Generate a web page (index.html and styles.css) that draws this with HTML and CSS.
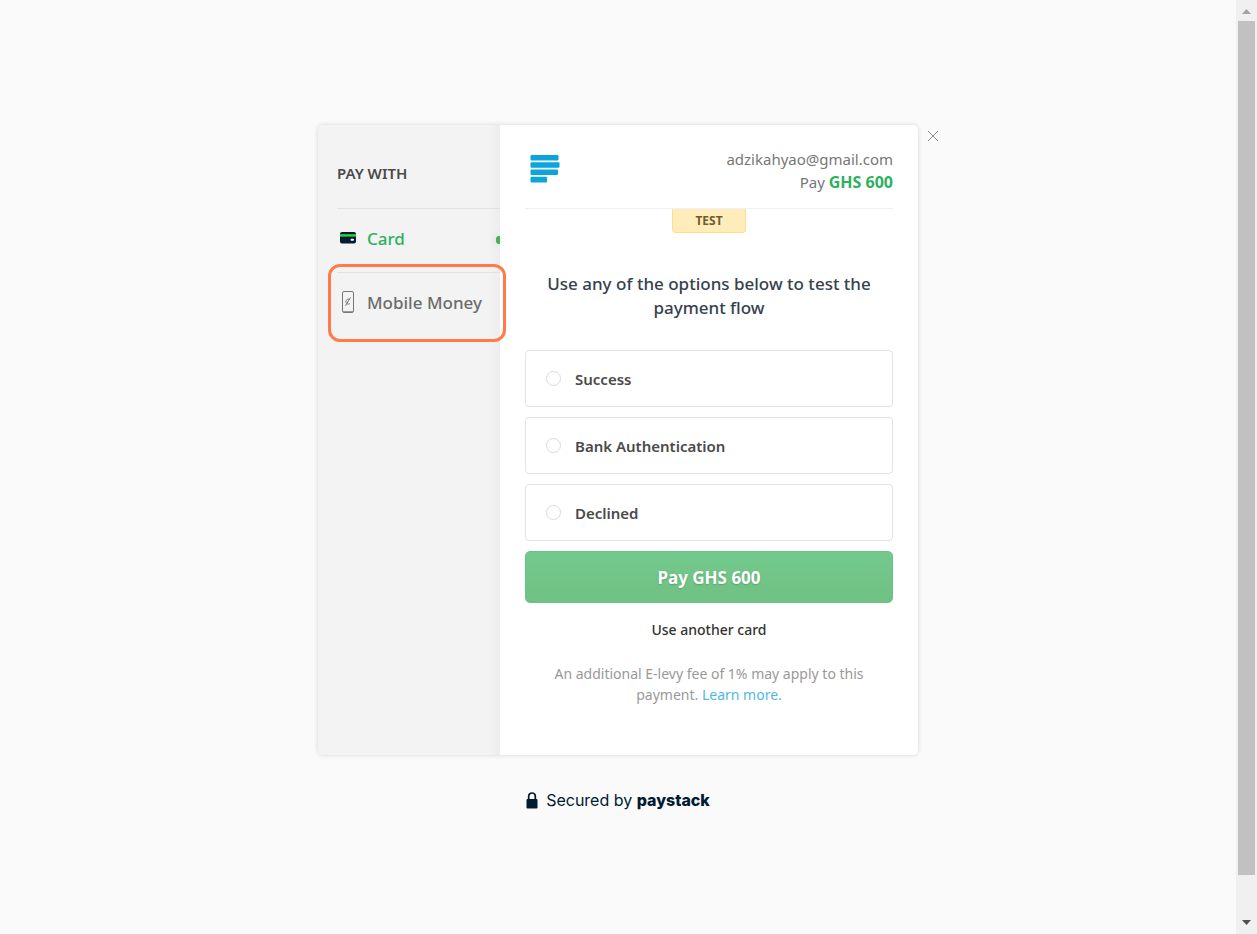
FILE: index.html
```html
<!DOCTYPE html>
<html lang="en">
<head>
<meta charset="utf-8">
<meta name="viewport" content="width=device-width, initial-scale=1">
<title>Paystack Checkout</title>
<link rel="stylesheet" href="styles.css">
</head>
<body>
<div class="page">
  <main class="stage">
    <div class="checkout">
      <nav class="channels" aria-label="Payment channels">
        <h2 class="channels-title">PAY WITH</h2>
        <button class="channel channel-active" type="button">
          <svg class="channel-icon" width="22" height="24" viewBox="0 0 22 24" aria-hidden="true">
            <rect x="3" y="5" width="16" height="11.500" rx="2" fill="#011b33"/>
            <path d="M3 7.200h16v2.400H3z" fill="#2fd33f"/>
            <rect x="13.500" y="11.800" width="3.500" height="2" rx="1" fill="#fff"/>
          </svg>
          <span>Card</span>
        </button>
        <button class="channel channel-marked" type="button">
          <svg class="channel-icon" width="22" height="24" viewBox="0 0 22 24" fill="none" stroke="#777" aria-hidden="true">
            <rect x="5.500" y="0.500" width="11" height="21" rx="1.500"/>
            <path d="M6 20.500h10" stroke="#999"/>
            <path d="M13 8.900C11.600 7.300 8.900 8.300 8.900 10.600s2.700 3.300 4.100 1.700M13.500 6.400L8.500 14.800"/>
          </svg>
          <span>Mobile Money</span>
        </button>
      </nav>
      <section class="panel">
        <header class="panel-head">
          <svg width="30" height="28" viewBox="0 0 30 28" fill="#0ba4db" role="img" aria-label="Merchant logo">
            <rect x="0.500" y="0" width="28" height="5.600" rx="1"/>
            <rect x="0.500" y="7.200" width="29" height="5.600" rx="1"/>
            <rect x="0.500" y="14.400" width="27.500" height="5.600" rx="1"/>
            <rect x="0.500" y="21.800" width="16.500" height="5.600" rx="1"/>
          </svg>
          <div class="customer">
            <div>adzikahyao@gmail.com</div>
            <div>Pay <strong class="amount">GHS 600</strong></div>
          </div>
        </header>
        <span class="test-tag">TEST</span>
        <form class="test-form">
          <h1 class="prompt">Use any of the options below to test the payment flow</h1>
          <label class="option"><input class="option-radio" type="radio" name="flow"><span>Success</span></label>
          <label class="option"><input class="option-radio" type="radio" name="flow"><span>Bank Authentication</span></label>
          <label class="option"><input class="option-radio" type="radio" name="flow"><span>Declined</span></label>
          <button class="pay" type="button">Pay GHS 600</button>
        </form>
        <button class="other-card" type="button">Use another card</button>
        <p class="fee">An additional E-levy fee of 1% may apply to this payment. <a class="fee-link" href="#">Learn more.</a></p>
      </section>
      <button class="close" type="button" aria-label="Close">
        <svg width="12" height="12" viewBox="0 0 12 12" stroke="#888" stroke-width="1" aria-hidden="true"><path d="M1 1l10 10M11 1L1 11"/></svg>
      </button>
    </div>
    <footer class="secured">
      <svg width="12" height="17" viewBox="0 0 12 17" aria-hidden="true">
        <path d="M2.700 8V4.300a3.300 3.300 0 0 1 6.600 0V8" fill="none" stroke="#011b33" stroke-width="1.700"/>
        <rect x="0.500" y="7" width="11" height="9.500" rx="1" fill="#011b33"/>
      </svg>
      <span>Secured by <strong class="brand">paystack</strong></span>
    </footer>
  </main>
  <div class="scrollbar" aria-hidden="true">
    <svg width="17" height="21" viewBox="0 0 17 21"><path d="M4 14l4.500-5 4.500 5z" fill="#a3a3a3"/></svg>
    <div class="thumb"></div>
    <svg class="scroll-down" width="17" height="21" viewBox="0 0 17 21"><path d="M4 7h9l-4.500 5z" fill="#505050"/></svg>
  </div>
</div>
</body>
</html>
```
FILE: styles.css
```css
* { box-sizing: border-box; }

body {
  margin: 0;
  background: #fafafa;
  color: #4a4a4a;
  font-family: "Noto Sans", "Open Sans", sans-serif;
  font-size: 15px;
}

button {
  border: 0;
  padding: 0;
  background: none;
  font-family: inherit;
  cursor: pointer;
}

.page {
  display: flex;
  min-height: 100vh;
}

.stage {
  flex: 1;
  display: flex;
  flex-direction: column;
  align-items: center;
  padding: 125px 20px 40px;
}

.checkout {
  position: relative;
  display: flex;
  width: 100%;
  max-width: 600px;
  border-radius: 5px;
  box-shadow: 0 0 4px rgba(0, 0, 0, .16);
}

.channels {
  flex: 0 0 182px;
  display: flex;
  flex-direction: column;
  padding-left: 19px;
  border-radius: 5px 0 0 5px;
  background: linear-gradient(to left, #ededed, #f3f3f3 12px);
}

.channels-title {
  margin: 0;
  padding: 36px 0 23px;
  font-size: 15px;
  line-height: 24px;
  font-weight: 600;
}

.channel {
  position: relative;
  display: flex;
  align-items: center;
  gap: 8px;
  height: 64px;
  padding-bottom: 4px;
  border-top: 1px solid #e2e2e2;
  color: #6b6b6b;
  font-size: 17px;
  font-weight: 500;
  white-space: nowrap;
}

.channel-active { color: #2bb160; }

.channel-active::after {
  content: "";
  position: absolute;
  right: 0;
  top: 27px;
  width: 4px;
  height: 8px;
  border-radius: 3px 0 0 3px;
  background: #4eae56;
  box-shadow: 0 0 8px rgba(78, 174, 86, .3);
}

.channel-marked::after {
  content: "";
  position: absolute;
  z-index: 1;
  inset: -9px -6px -6px -9px;
  border: 3px solid #ff7b4a;
  border-radius: 12px;
}

.panel {
  flex: 1;
  display: flex;
  flex-direction: column;
  align-items: center;
  padding: 0 25px 50px;
  border-radius: 0 5px 5px 0;
  background: #fff;
}

.panel-head {
  align-self: stretch;
  display: flex;
  justify-content: space-between;
  align-items: flex-start;
  height: 84px;
  padding: 30px 0 0 5px;
  border-bottom: 1px solid #f0f0f0;
}

.customer {
  margin-top: -7px;
  text-align: right;
  color: #777;
  line-height: 23px;
}

.amount {
  color: #2bb160;
  font-size: 16px;
  font-weight: 700;
}

.test-tag {
  padding: 0 22px;
  border: 1px solid #ffdf8a;
  border-top: 0;
  border-radius: 0 0 4px 4px;
  background: #ffecbb;
  color: #6f5b2c;
  font-size: 12px;
  line-height: 23px;
  font-weight: 700;
}

.test-form {
  align-self: stretch;
  display: flex;
  flex-direction: column;
  gap: 10px;
}

.prompt {
  margin: 39px 20px 20px;
  color: #35424e;
  text-align: center;
  font-size: 17px;
  line-height: 24px;
  font-weight: 500;
}

.option {
  display: flex;
  align-items: center;
  gap: 14px;
  height: 57px;
  padding: 0 20px;
  border: 1px solid #e2e2e2;
  border-radius: 4px;
  font-weight: 600;
}

.option-radio {
  appearance: none;
  width: 15px;
  height: 15px;
  margin: 0;
  border: 1px solid #dadada;
  border-radius: 50%;
  background: #fff;
}

.pay {
  height: 52px;
  border: 1px solid #68c486;
  border-radius: 5px;
  background: linear-gradient(#73c98d, #70c182);
  color: #fff;
  font-size: 17px;
  font-weight: 700;
  text-shadow: 0 1px 2px rgba(0, 0, 0, .2);
}

.other-card {
  margin-top: 16px;
  color: #333;
  font-size: 14px;
  line-height: 22px;
  font-weight: 500;
}

.fee {
  margin: 22px 20px 0;
  color: #999;
  text-align: center;
  font-size: 14px;
  line-height: 21px;
}

.fee-link {
  color: #4fb9e3;
  text-decoration: none;
}

.close {
  position: absolute;
  top: 5px;
  right: -21px;
  display: flex;
}

.secured {
  display: flex;
  align-items: center;
  gap: 8px;
  margin-top: 35px;
  color: #011b33;
  font-family: Inter, sans-serif;
  font-size: 16px;
  line-height: 20px;
}

.brand { font-weight: 800; }

.scrollbar {
  position: sticky;
  top: 0;
  display: flex;
  flex-direction: column;
  align-items: center;
  width: 21px;
  height: 100vh;
  background: #f0f0f0;
}

.thumb {
  width: 17px;
  height: calc(100% - 80px);
  background: #c1c1c1;
}

.scroll-down { margin-top: auto; }
```
